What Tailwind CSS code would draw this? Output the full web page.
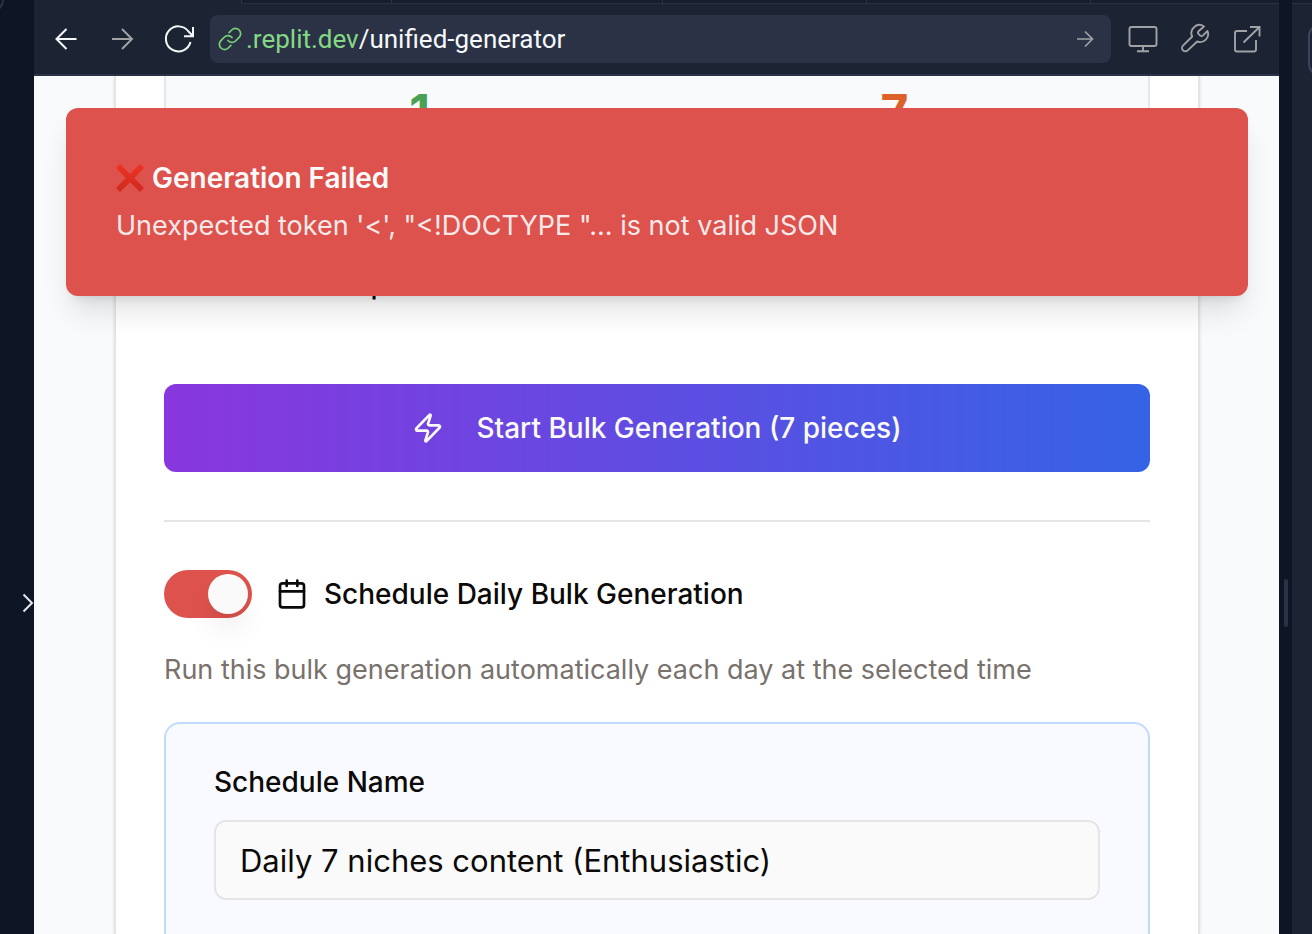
<!DOCTYPE html>
<html lang="en">
<head>
<meta charset="utf-8">
<meta name="viewport" content="width=device-width, initial-scale=1">
<title>Unified Generator</title>
<script src="https://cdn.jsdelivr.net/npm/@tailwindcss/browser@4"></script>
</head>
<body class="flex h-screen overflow-hidden bg-[#0e1525] font-[Inter,sans-serif] text-[#0c0a09]">

  <!-- Collapsed side panel -->
  <aside class="relative flex w-[34px] shrink-0 items-start justify-end overflow-hidden pt-[592px]">
    <span class="absolute -top-3 -left-5 size-6 rounded-full border-2 border-[#2b3245]"></span>
    <button type="button" aria-label="Expand panel" class="text-[#e5e7eb]">
      <svg class="block" width="12" height="22" viewBox="0 0 12 22" fill="none" stroke="currentColor" stroke-width="2"><path d="M1.5 2.5 10 11l-8.500 8.500"/></svg>
    </button>
  </aside>

  <main class="flex min-w-0 flex-1 flex-col">
    <!-- Lower edge of the tab strip -->
    <div class="flex h-1 shrink-0 bg-[#1c2333]">
      <div class="w-[207px] shrink-0"></div>
      <div class="flex flex-1 border-b border-l border-[#2b3245] bg-[#171d2d]">
        <div class="w-[150px] border-r border-[#2b3245]"></div>
        <div class="w-[271px] border-r border-[#2b3245]"></div>
        <div class="w-[204px] border-r border-[#2b3245]"></div>
        <div class="w-[224px] border-r border-[#2b3245]"></div>
      </div>
    </div>

    <!-- Browser toolbar -->
    <nav class="flex h-[72px] shrink-0 items-center border-b-2 border-[#2b3245] bg-[#1c2333] px-4 text-[#a0a2a6]">
      <div class="flex gap-6">
        <button type="button" aria-label="Back" class="text-[#f5f9fc]">
          <svg width="32" height="32" viewBox="0 0 32 32" fill="none" stroke="currentColor" stroke-width="2"><path d="M26.500 16H7M16.500 6 6.500 16l10 10"/></svg>
        </button>
        <button type="button" aria-label="Forward">
          <svg width="32" height="32" viewBox="0 0 32 32" fill="none" stroke="currentColor" stroke-width="2"><path d="M6 16h19.500M16 6l10 10-10 10"/></svg>
        </button>
        <button type="button" aria-label="Reload" class="text-[#f5f9fc]">
          <svg width="32" height="32" viewBox="0 0 32 32" fill="none" stroke="currentColor" stroke-width="2"><path d="M28.500 19A12.500 12.500 0 1 1 26.500 8.500l4.500 4.500M31 4v9.200H22"/></svg>
        </button>
      </div>
      <form class="ml-4 flex h-12 min-w-0 flex-1 items-center rounded-lg bg-[#2b3245] pr-3 pl-2 font-[Roboto,sans-serif] text-[26px]">
        <svg class="shrink-0 text-[#79d279]" width="24" height="24" viewBox="0 0 24 24" fill="none" stroke="currentColor" stroke-width="1.700" stroke-linecap="round"><path d="M10 13.500a5 5 0 0 0 7.500.5l3.600-3.600a5.200 5.200 0 0 0-7.400-7.400l-2.600 2.600"/><path d="M14 10.500a5 5 0 0 0-7.500-.5l-3.600 3.600a5.200 5.200 0 0 0 7.400 7.400l2.600-2.600"/></svg>
        <label for="path" class="pt-px pl-1 text-[#85d885]">.replit.dev</label>
        <input id="path" type="text" value="/unified-generator" class="min-w-0 flex-1 bg-transparent pt-px text-[#f5f9fc] outline-none">
        <button type="submit" aria-label="Go">
          <svg class="block" width="28" height="28" viewBox="0 0 28 28" fill="none" stroke="currentColor" stroke-width="1.700"><path d="M6 14h15M14 6.500l7.500 7.500-7.500 7.500"/></svg>
        </button>
      </form>
      <div class="ml-4 flex gap-5">
        <button type="button" aria-label="Device size">
          <svg width="32" height="32" viewBox="0 0 32 32" fill="none" stroke="currentColor" stroke-width="1.900"><rect x="2.500" y="4" width="27" height="19" rx="2"/><path d="M16 23v5M10 28.200h12"/></svg>
        </button>
        <button type="button" aria-label="Developer tools">
          <svg width="32" height="32" viewBox="-1 0 32 32" fill="none" stroke="currentColor" stroke-width="1.900" stroke-linejoin="round"><path d="M24 3.500A8 8 0 0 0 12.200 13.500L3 22.700a3.300 3.300 0 0 0 4.700 4.700L17.200 18.500A8 8 0 0 0 27.500 8L22.800 12.600a2 2 0 0 1-2.600 0l-1.700-1.700a2 2 0 0 1 0-2.600z"/></svg>
        </button>
        <button type="button" aria-label="Open in new tab">
          <svg width="32" height="32" viewBox="0 0 32 32" fill="none" stroke="currentColor" stroke-width="1.900"><path d="M16 8H6a2 2 0 0 0-2 2v16.500a2 2 0 0 0 2 2h17a2 2 0 0 0 2-2V17M12.500 19.500 28 4.500M19 4h9.500v9.500"/></svg>
        </button>
      </div>
    </nav>

    <!-- Previewed page -->
    <div class="relative min-h-0 flex-1 overflow-hidden bg-[#f8fafc] pr-[79px] pl-20 text-[28px] leading-10">
      <section class="h-full border-x-2 border-[#e5e5e5] bg-white px-12 shadow-sm">
        <div class="grid h-[120px] grid-cols-2 gap-8 rounded-b-2xl border-x-2 border-b-2 border-[#e5e7eb] bg-[#f8fafc] px-8 pt-1 text-center text-[48px] leading-[64px] font-bold">
          <div class="text-[#4aa154]">1</div>
          <div class="text-[#dc622a]">7</div>
        </div>
        <p class="mt-[68px] font-medium">Load custom topics</p>

        <button type="button" class="mt-20 flex h-[88px] w-full items-center justify-center gap-8 rounded-xl bg-linear-to-r/srgb from-[#8936de] to-[#3563e5] font-medium text-[#fafafa]">
          <svg width="32" height="32" viewBox="0 0 24 24" fill="none" stroke="currentColor" stroke-width="2" stroke-linecap="round" stroke-linejoin="round"><path d="M4 14a1 1 0 0 1-.78-1.630l9.900-10.200a.5.5 0 0 1 .86.460l-1.920 6.020A1 1 0 0 0 13 10h7a1 1 0 0 1 .78 1.630l-9.900 10.200a.5.5 0 0 1-.86-.460l1.920-6.020A1 1 0 0 0 11 14z"/></svg>
          Start Bulk Generation (7 pieces)
        </button>

        <div class="mt-12 border-t-2 border-[#e5e5e5] pt-12">
          <div class="flex h-12 items-center">
            <input id="schedule" type="checkbox" role="switch" checked class="h-12 w-[88px] shrink-0 appearance-none rounded-full bg-[#dd524c] p-1 before:ml-10 before:block before:size-10 before:rounded-full before:bg-[#fafafa] before:shadow-[0_20px_30px_-6px_rgba(0,0,0,0.1),0_8px_12px_-8px_rgba(0,0,0,0.1)]">
            <label for="schedule" class="flex items-center gap-4 pl-6 font-medium">
              <svg width="32" height="32" viewBox="0 0 24 24" fill="none" stroke="currentColor" stroke-width="2" stroke-linecap="round" stroke-linejoin="round"><path d="M8 2v4M16 2v4M3 10h18"/><rect x="3" y="4" width="18" height="18" rx="2"/></svg>
              Schedule Daily Bulk Generation
            </label>
          </div>
          <p class="mt-8 text-[27px] text-[#78716c]">Run this bulk generation automatically each day at the selected time</p>
        </div>

        <div class="mt-8 h-[400px] rounded-2xl border-2 border-[#bfdbfe] bg-[#f9faff] px-12 pt-10">
          <label for="name" class="block leading-9 font-medium">Schedule Name</label>
          <input id="name" type="text" value="Daily 7 niches content (Enthusiastic)" class="mt-5 h-20 w-full rounded-xl border-2 border-[#e5e5e5] bg-[#fafafa] px-6 text-[31px] outline-none">
        </div>
      </section>

      <div role="alert" class="absolute top-8 right-[31px] left-8 rounded-xl bg-[#dd524c] p-[50px] text-[#fafafa] shadow-[0_20px_30px_-6px_rgba(0,0,0,0.12),0_8px_12px_-8px_rgba(0,0,0,0.15)]">
        <div class="flex items-center gap-2 font-semibold">
          <svg width="28" height="28" viewBox="0 0 28 28" aria-hidden="true"><defs><linearGradient id="x" x2="0" y2="1"><stop stop-color="#ed3323"/><stop offset="1" stop-color="#cf2a1e"/></linearGradient></defs><path fill="url(#x)" d="M4 0 14 9.700 24 0l4 4-9.700 10L28 24l-4 4-10-9.700L4 28l-4-4 9.700-10L0 4z"/></svg>
          Generation Failed
        </div>
        <div class="mt-2 text-[27px] opacity-90">Unexpected token '&lt;', "&lt;!DOCTYPE "... is not valid JSON</div>
      </div>
    </div>
  </main>

  <!-- Pane divider -->
  <div class="w-[13px] shrink-0 pt-[579px] pl-[5px]"><div class="h-12 w-1 rounded-full bg-[#2b3245]"></div></div>

  <!-- Neighbouring pane -->
  <aside class="w-5 shrink-0 overflow-hidden bg-[#1c2333]">
    <div class="h-1 border-b border-[#2b3245] bg-[#171d2d]"></div>
    <div class="mt-5 ml-4 h-[52px] w-20 rounded-xl border-2 border-[#3c445c]"></div>
  </aside>
</body>
</html>
